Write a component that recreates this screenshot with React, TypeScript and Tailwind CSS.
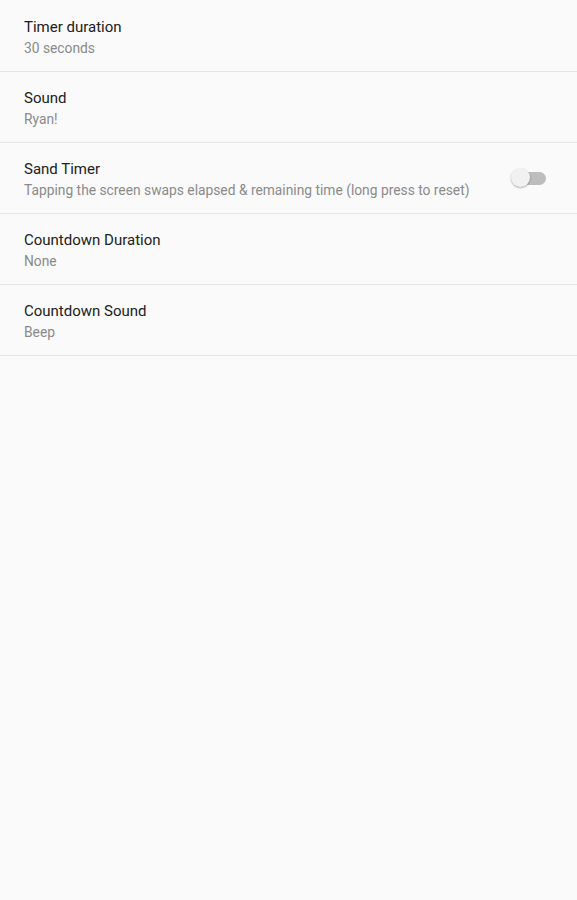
import React from 'react';

interface RowProps {
  title: string;
  summary: string;
  toggle?: boolean;
}

const Row: React.FC<RowProps> = ({ title, summary, toggle }) => (
  <div className="flex items-center h-[71px] border-b border-[#e6e6e6] pl-6 pr-[31px]">
    <div className="flex-1 min-w-0 pt-[3px]">
      <div className="text-[15px] leading-[19px] text-[#212121]">{title}</div>
      <div className="text-[13.8px] leading-[18px] text-[#8a8a8a] mt-[2px]">{summary}</div>
    </div>
    {toggle && (
      <div className="relative w-[35px] h-[20px] shrink-0">
        <div className="absolute left-[9px] top-[4px] w-[26px] h-[13px] rounded-full bg-[#bdbdbd]" />
        <div className="absolute left-0 top-0 w-[19px] h-[19px] rounded-full bg-[#f1f1f1] shadow-[0_1px_2px_rgba(0,0,0,0.3)]" />
      </div>
    )}
  </div>
);

export default function App() {
  return (
    <div className="min-h-[900px] bg-[#fafafa] pt-px font-['Roboto',sans-serif]">
      <Row title="Timer duration" summary="30 seconds" />
      <Row title="Sound" summary="Ryan!" />
      <Row
        title="Sand Timer"
        summary="Tapping the screen swaps elapsed & remaining time (long press to reset)"
        toggle
      />
      <Row title="Countdown Duration" summary="None" />
      <Row title="Countdown Sound" summary="Beep" />
    </div>
  );
}
